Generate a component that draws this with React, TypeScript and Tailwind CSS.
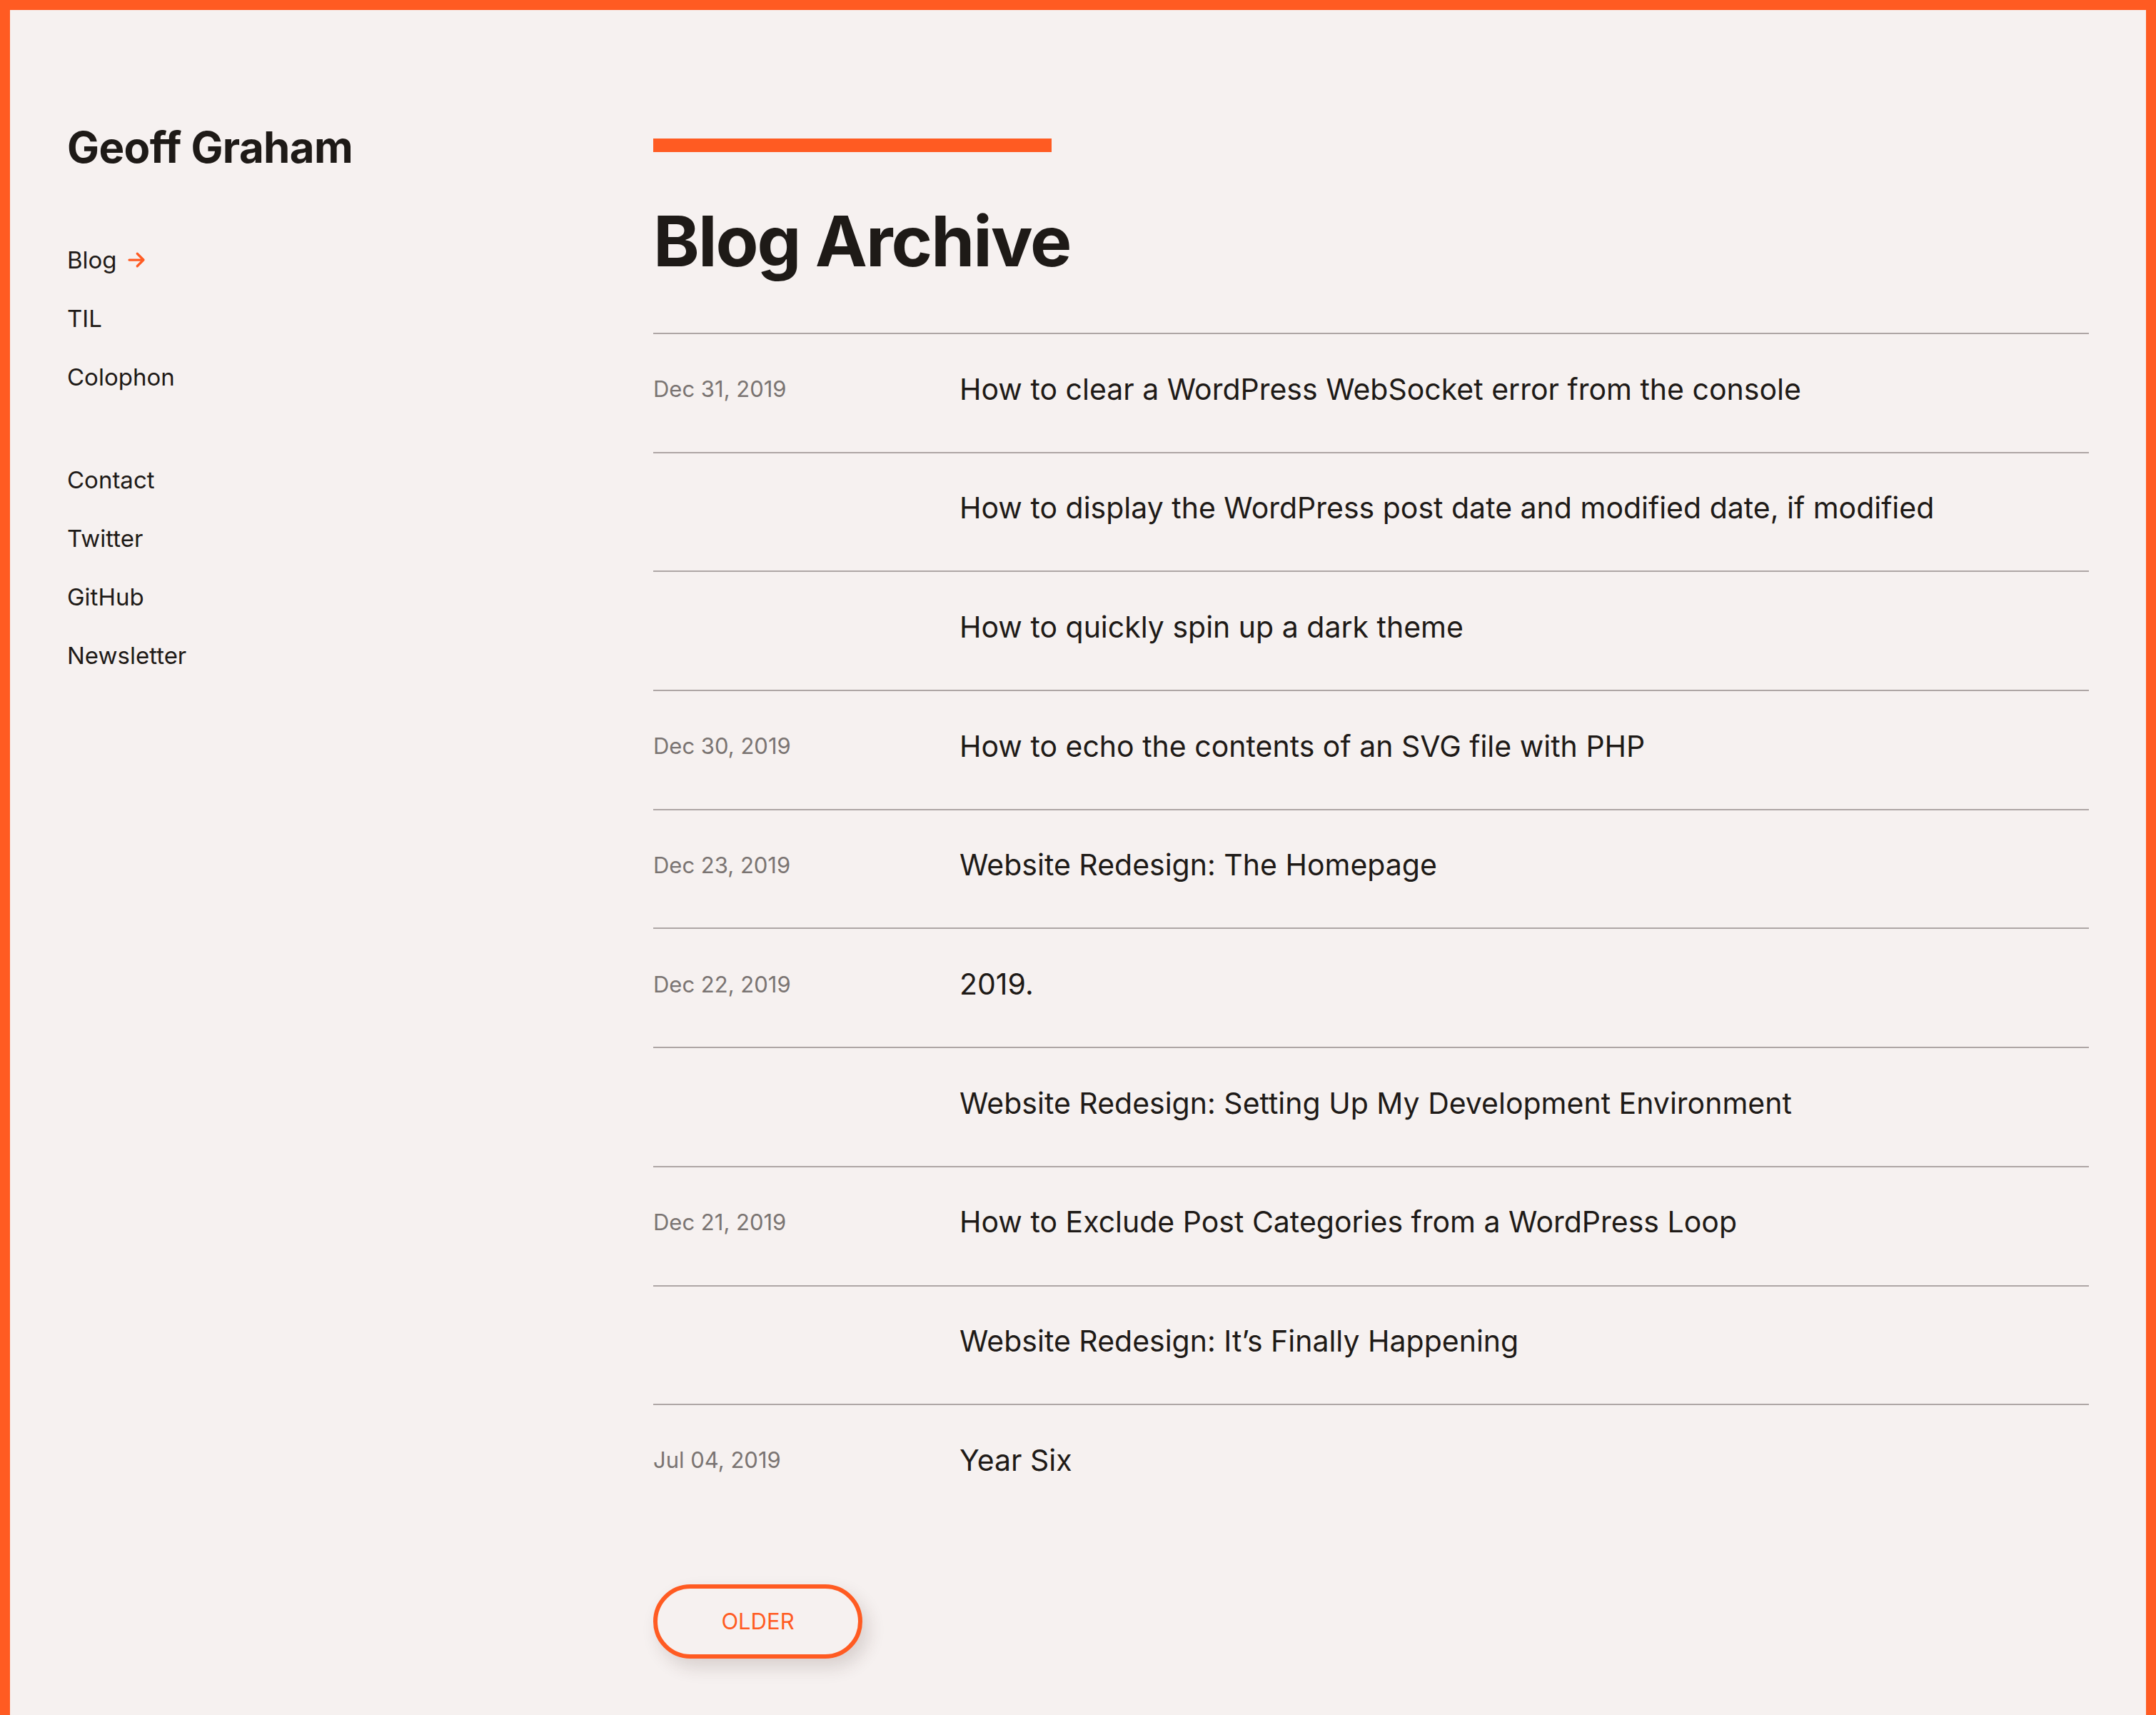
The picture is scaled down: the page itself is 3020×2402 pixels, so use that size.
import React from "react";

const posts: { date?: string; title: string }[] = [
  { date: "Dec 31, 2019", title: "How to clear a WordPress WebSocket error from the console" },
  { title: "How to display the WordPress post date and modified date, if modified" },
  { title: "How to quickly spin up a dark theme" },
  { date: "Dec 30, 2019", title: "How to echo the contents of an SVG file with PHP" },
  { date: "Dec 23, 2019", title: "Website Redesign: The Homepage" },
  { date: "Dec 22, 2019", title: "2019." },
  { title: "Website Redesign: Setting Up My Development Environment" },
  { date: "Dec 21, 2019", title: "How to Exclude Post Categories from a WordPress Loop" },
  { title: "Website Redesign: It’s Finally Happening" },
  { date: "Jul 04, 2019", title: "Year Six" },
];

export default function App() {
  return (
    <div
      className="min-h-[2402px] bg-[#f6f1f0] border-t-[14px] border-x-[14px] border-[#ff5b22] text-[#1e1a17]"
      style={{ fontFamily: "Inter, 'Noto Sans', sans-serif" }}
    >
      <div className="flex px-[80px]">
        <aside className="w-[821px] shrink-0 pt-[162px]">
          <div className="text-[60px] leading-[60px] font-bold tracking-[-0.01em]">Geoff Graham</div>
          <nav className="mt-[87px] text-[33px]">
            <ul>
              <li className="leading-[82px] flex items-center gap-[12px]">
                <span>Blog</span>
                <svg width="30" height="30" viewBox="0 0 24 24" fill="none" stroke="#ff5b22" strokeWidth="2.6" strokeLinecap="round" strokeLinejoin="round">
                  <path d="M4 12h15" />
                  <path d="M13 5l7 7-7 7" />
                </svg>
              </li>
              <li className="leading-[82px]">TIL</li>
              <li className="leading-[82px]">Colophon</li>
            </ul>
            <ul className="mt-[62px]">
              <li className="leading-[82px]">Contact</li>
              <li className="leading-[82px]">Twitter</li>
              <li className="leading-[82px]">GitHub</li>
              <li className="leading-[82px]">Newsletter</li>
            </ul>
          </nav>
        </aside>
        <main className="flex-1 pt-[180px] pb-[120px]">
          <div className="w-[558px] h-[19px] bg-[#ff5b22]" />
          <h1 className="mt-[76px] text-[98px] leading-[98px] font-bold tracking-[-0.02em]">Blog Archive</h1>
          <ul className="mt-[79px]">
            {posts.map((p, i) => (
              <li key={i} className="flex items-center h-[166.7px] pb-[10px] border-t-2 border-[#aea6a5]">
                <span className="w-[429px] shrink-0 text-[31px] text-[#7a7472]">{p.date ?? ""}</span>
                <span className="text-[41px]">{p.title}</span>
              </li>
            ))}
          </ul>
          <button className="mt-[86px] w-[293px] h-[104px] rounded-full border-[6px] border-[#ff5b22] text-[#ff5b22] text-[31px] uppercase shadow-[8px_12px_24px_rgba(60,40,30,0.16)] bg-[#f6f1f0]">
            Older
          </button>
        </main>
      </div>
    </div>
  );
}
